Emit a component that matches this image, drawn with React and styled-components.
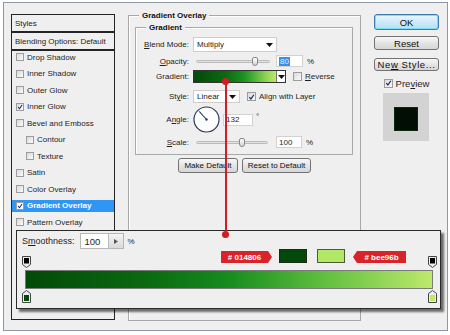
import React from 'react';
import styled, { createGlobalStyle } from 'styled-components';

const FONT = `"Liberation Sans", Arial, sans-serif`;

const GlobalStyle = createGlobalStyle`
  html, body { margin: 0; padding: 0; background: #fff; }
  body { font-family: ${FONT}; color: #1e1e1e; white-space: nowrap; }
  * { box-sizing: border-box; }
`;

const Window = styled.div`
  position: relative;
  width: 445px;
  height: 329px;
  margin: 2px 0 0 3px;
  padding: 11px 7px 0 7px;
  border: 1px solid #8d97a6;
  background: #efefef;
  display: flex;
  gap: 13px;
`;

/* ---------- left styles list ---------- */

const LeftCol = styled.div`
  width: 104px;
  height: 306px;
  display: flex;
  flex-direction: column;
`;

const HeadBox = styled.div`
  height: 18px;
  border: 1px solid #242424;
  padding-left: 3px;
  display: flex;
  align-items: center;
  font-size: 8px;
`;

const ListBox = styled.div`
  flex: 1;
  border: 1px solid #242424;
  display: flex;
  flex-direction: column;
  gap: 4.5px;
`;

const Item = styled.div`
  height: 12px;
  display: flex;
  align-items: center;
  gap: 3px;
  padding-left: ${p => (p.$indent ? 14 : 4)}px;
  font-size: 8px;
  background: ${p => (p.$active ? '#2f96f5' : 'transparent')};
  color: ${p => (p.$active ? '#fff' : '#1e1e1e')};
  font-weight: ${p => (p.$active ? 'bold' : 'normal')};
`;

const Box = styled.span`
  flex: none;
  width: ${p => p.$size || 8}px;
  height: ${p => p.$size || 8}px;
  border: 1px solid #9c9c9c;
  background: ${p => (p.$white ? '#fff' : 'linear-gradient(135deg, #d9d9d9, #fbfbfb)')};
  display: inline-flex;
  align-items: center;
  justify-content: center;
`;

const Check = ({ checked, size, white }) => (
  <Box $size={size} $white={white}>
    {checked && (
      <svg width="8" height="8" viewBox="0 0 10 10">
        <path d="M1.8 5.2 L4.2 7.8 L8.4 1.8" fill="none" stroke="#1c2c70" strokeWidth="1.7" />
      </svg>
    )}
  </Box>
);

/* ---------- group boxes ---------- */

const Group = styled.div`
  border: 1px solid #a8a8a8;
  box-shadow: inset 1px 1px 0 #fff;
  height: ${p => p.$h}px;
  margin: ${p => p.$m || 0};
`;

const Legend = styled.div`
  width: fit-content;
  margin: -6px 0 0 10px;
  padding: 0 3px;
  line-height: 11px;
  background: #efefef;
  font-weight: bold;
  font-size: 8px;
  color: #111;
`;

const MidCol = styled.div`
  width: 233px;
  margin-top: 1px;
`;

const Row = styled.div`
  display: grid;
  grid-template-columns: 53px auto;
  column-gap: 4px;
  align-items: center;
  height: ${p => p.$h}px;
  margin-top: ${p => p.$mt}px;
`;

const Label = styled.span`
  text-align: right;
  font-size: 8px;
  color: #222;
`;

const Controls = styled.div`
  display: flex;
  align-items: center;
  height: 100%;
  font-size: 8px;
`;

const Select = styled.div`
  width: ${p => p.$w}px;
  height: 100%;
  background: #fff;
  border: 1px solid #cdcdcd;
  padding: 0 3px;
  display: flex;
  align-items: center;
  justify-content: space-between;
  font-size: 8px;
`;

const Caret = () => (
  <svg width="7" height="4" viewBox="0 0 7 4">
    <path d="M0 0h7L3.5 4z" fill="#111" />
  </svg>
);

const Track = styled.div`
  position: relative;
  width: ${p => p.$w}px;
  height: 3px;
  margin-left: 3px;
  background: #e3e3e3;
  border: 1px solid #bababa;
  border-radius: 2px;
`;

const Thumb = styled.div`
  position: absolute;
  top: -4px;
  width: 6px;
  height: 9px;
  background: linear-gradient(#fefefe, #d4d4d4);
  border: 1px solid #888;
  border-radius: 2px 2px 3px 3px;
`;

const Field = styled.div`
  width: ${p => p.$w}px;
  height: ${p => p.$h || 12}px;
  margin-left: ${p => p.$ml || 0}px;
  background: #fff;
  border: 1px solid #d2d2d2;
  padding-left: 2px;
  display: flex;
  align-items: center;
  font-size: 8px;
`;

const Selected = styled.span`
  background: #3d8ee8;
  color: #e2efff;
  padding: 0 1px;
`;

const Unit = styled.span`
  margin-left: ${p => p.$ml || 4}px;
  font-size: 8px;
  align-self: ${p => (p.$top ? 'flex-start' : 'center')};
  margin-top: ${p => (p.$top ? 6 : 0)}px;
`;

const GradPicker = styled.div`
  width: 93px;
  height: 100%;
  border: 1px solid #333;
  display: flex;
`;

const GradFill = styled.div`
  flex: 1;
  background: linear-gradient(to right, #024a08, #0b6c10 40%, #1e9424 62%, #8fd450 88%, #bee96b);
`;

const GradArrow = styled.div`
  width: 9px;
  background: #fff;
  border-left: 1px solid #777;
  display: flex;
  align-items: center;
  justify-content: center;
`;

const CheckLabel = styled.span`
  margin-left: 3px;
`;

const Spacer = styled.span`
  width: ${p => p.$w}px;
  flex: ${p => (p.$grow ? 1 : 'none')};
`;

const ButtonRow = styled.div`
  display: flex;
  justify-content: center;
  gap: 4px;
  margin-top: 3px;
`;

const Button = styled.div`
  width: ${p => p.$w}px;
  height: ${p => p.$h}px;
  margin-top: ${p => p.$mt || 0}px;
  border: 1px solid #727272;
  border-radius: 3px;
  background: linear-gradient(#f8f8f8, #e4e4e4 50%, #d6d6d6);
  display: flex;
  align-items: center;
  justify-content: center;
  font-size: ${p => p.$fs || 8}px;
  letter-spacing: ${p => p.$ls || 0}px;
  color: #111;
`;

const DefaultButton = styled(Button)`
  border-color: #3a7ab0;
  box-shadow: inset 0 0 0 1px #7fdcf3;
  background: linear-gradient(#eaf6fc, #cfeaf8 50%, #b5dff3);
`;

/* ---------- right column ---------- */

const RightCol = styled.div`
  width: 65px;
  display: flex;
  flex-direction: column;
`;

const PreviewRow = styled.div`
  display: flex;
  align-items: center;
  justify-content: center;
  gap: 3px;
  height: 10px;
  margin-top: 7px;
  font-size: 9.5px;
`;

const PreviewBox = styled.div`
  width: 46px;
  height: 48px;
  margin: 5px 0 0 9px;
  background: #d3d3d3;
  display: flex;
  align-items: center;
  justify-content: center;
`;

const PreviewInner = styled.div`
  width: 24px;
  height: 24px;
  margin-top: 4px;
  background: #020e04;
  border: 1px solid #0a2a0e;
`;

/* ---------- gradient editor callout ---------- */

const Popup = styled.div`
  position: absolute;
  left: 12px;
  top: 227px;
  width: 425px;
  height: 79px;
  border: 1px solid #2a2a2a;
  background: #efefef;
  box-shadow: 3px 3px 2px rgba(0, 0, 0, 0.55);
  padding: 2px 3px 0 5px;
  display: flex;
  flex-direction: column;
`;

const SmoothRow = styled.div`
  display: flex;
  align-items: center;
  height: 16px;
  font-size: 9px;
`;

const SmoothInput = styled.div`
  width: 29px;
  height: 16px;
  margin-left: 5px;
  background: #fff;
  border: 1px solid #b9b9b9;
  padding-left: 4px;
  display: flex;
  align-items: center;
  font-size: 9.5px;
`;

const Spin = styled.div`
  width: 15px;
  height: 16px;
  border: 1px solid #b5b5b5;
  border-left: none;
  background: linear-gradient(#f4f4f4, #d9d9d9);
  display: flex;
  align-items: center;
  justify-content: center;
`;

const StopRow = styled.div`
  display: flex;
  align-items: flex-end;
  height: ${p => p.$h}px;
  margin-top: ${p => p.$mt || 0}px;
`;

const Tags = styled.div`
  margin-left: auto;
  margin-right: 22px;
  align-self: flex-start;
  display: flex;
  align-items: flex-end;
  height: 14px;
`;

const Tag = styled.div`
  width: ${p => p.$w}px;
  height: 12px;
  margin-left: ${p => p.$ml || 0}px;
  background: #d9232b;
  color: #fff;
  font-weight: bold;
  font-size: 8px;
  display: flex;
  align-items: center;
  justify-content: center;
  padding: ${p => (p.$dir === 'right' ? '0 4px 0 0' : '0 0 0 4px')};
  clip-path: ${p =>
    p.$dir === 'right'
      ? 'polygon(0 0, calc(100% - 4px) 0, 100% 50%, calc(100% - 4px) 100%, 0 100%)'
      : 'polygon(4px 0, 100% 0, 100% 100%, 4px 100%, 0 50%)'};
`;

const Swatch = styled.div`
  width: 28px;
  height: 14px;
  margin-left: ${p => p.$ml}px;
  background: ${p => p.$c};
  border: 1px solid ${p => p.$b};
`;

const Bar = styled.div`
  height: 19px;
  margin: 2px 4px 0 3px;
  border: 1px solid #7a7a7a;
  background: linear-gradient(to right, #024a08, #0a6a10 30%, #168c1e 50%, #62c040 74%, #bee96b);
`;

const StopTop = () => (
  <svg width="9" height="12" viewBox="0 0 9 12">
    <path d="M0.5 0.5h8v8L4.5 11.5 0.5 8.5z" fill="#eee" stroke="#444" />
    <rect x="2" y="2" width="5" height="5.5" fill="#000" />
  </svg>
);

const StopBottom = ({ color }) => (
  <svg width="9" height="13" viewBox="0 0 9 13">
    <path d="M4.5 0.5L8.5 3.5v9h-8v-9z" fill="#eee" stroke="#444" />
    <rect x="2" y="5" width="5" height="6" fill={color} />
  </svg>
);

const Connector = styled.div`
  position: absolute;
  left: 218px;
  top: 75px;
  width: 7px;
  height: 160px;
  display: flex;
  flex-direction: column;
  align-items: center;
  z-index: 2;
`;

const Dot = styled.div`
  width: 7px;
  height: 7px;
  flex: none;
  border-radius: 50%;
  background: #d21c26;
`;

const Line = styled.div`
  flex: 1;
  width: 2px;
  margin: -3px 0;
  background: #d21c26;
`;

const U = styled.span`
  text-decoration: underline;
`;

const Dial = () => (
  <svg width="27" height="27" viewBox="0 0 27 27">
    <circle cx="13.5" cy="13.5" r="12.5" fill="#fff" stroke="#2c3a58" strokeWidth="1.2" />
    <line x1="13.5" y1="13.5" x2="6.2" y2="5.4" stroke="#2c3a58" strokeWidth="1.1" />
    <circle cx="13.5" cy="13.5" r="1.2" fill="#2c3a58" />
  </svg>
);

const styleItems = [
  { name: 'Drop Shadow' },
  { name: 'Inner Shadow' },
  { name: 'Outer Glow' },
  { name: 'Inner Glow', checked: true },
  { name: 'Bevel and Emboss' },
  { name: 'Contour', indent: true },
  { name: 'Texture', indent: true },
  { name: 'Satin' },
  { name: 'Color Overlay' },
  { name: 'Gradient Overlay', checked: true, active: true },
  { name: 'Pattern Overlay' },
];

export default function App() {
  return (
    <>
      <GlobalStyle />
      <Window>
        <LeftCol>
          <HeadBox>Styles</HeadBox>
          <HeadBox>Blending Options: Default</HeadBox>
          <ListBox>
            {styleItems.map(it => (
              <Item key={it.name} $indent={it.indent} $active={it.active}>
                <Check checked={it.checked} white={it.active} />
                <span>{it.name}</span>
              </Item>
            ))}
          </ListBox>
        </LeftCol>

        <MidCol>
          <Group $h={306}>
            <Legend>Gradient Overlay</Legend>
            <Group $h={128} $m="6px 7px 0 6px">
              <Legend>Gradient</Legend>
              <Row $h={15} $mt={4}>
                <Label><U>B</U>lend Mode:</Label>
                <Controls>
                  <Select $w={84}>Multiply<Caret /></Select>
                </Controls>
              </Row>
              <Row $h={12} $mt={3}>
                <Label><U>O</U>pacity:</Label>
                <Controls>
                  <Track $w={74}><Thumb style={{ left: 55 }} /></Track>
                  <Field $w={27} $ml={6}><Selected>80</Selected></Field>
                  <Unit>%</Unit>
                </Controls>
              </Row>
              <Row $h={13} $mt={3}>
                <Label>Gradient:</Label>
                <Controls>
                  <GradPicker>
                    <GradFill />
                    <GradArrow><Caret /></GradArrow>
                  </GradPicker>
                  <Spacer $w={7} />
                  <Check size={9} />
                  <CheckLabel><U>R</U>everse</CheckLabel>
                </Controls>
              </Row>
              <Row $h={13} $mt={7}>
                <Label>St<U>y</U>le:</Label>
                <Controls>
                  <Select $w={47}>Linear<Caret /></Select>
                  <Spacer $w={7} />
                  <Check checked size={9} />
                  <CheckLabel>Align with Layer</CheckLabel>
                </Controls>
              </Row>
              <Row $h={27} $mt={3}>
                <Label>A<U>n</U>gle:</Label>
                <Controls>
                  <Dial />
                  <Field $w={30} $ml={3}>132</Field>
                  <Unit $ml={3} $top>°</Unit>
                </Controls>
              </Row>
              <Row $h={12} $mt={3}>
                <Label><U>S</U>cale:</Label>
                <Controls>
                  <Track $w={72}><Thumb style={{ left: 42 }} /></Track>
                  <Field $w={26} $ml={8}>100</Field>
                  <Unit>%</Unit>
                </Controls>
              </Row>
            </Group>
            <ButtonRow>
              <Button $w={60} $h={15}>Make Default</Button>
              <Button $w={69} $h={15}>Reset to Default</Button>
            </ButtonRow>
          </Group>
        </MidCol>

        <RightCol>
          <DefaultButton $w={65} $h={16} $fs={9.5}>OK</DefaultButton>
          <Button $w={65} $h={14} $mt={6} $fs={9.5}>Reset</Button>
          <Button $w={65} $h={13} $mt={8} $fs={9.5} $ls={0.6}>
            <span>Ne<U>w</U> Style...</span>
          </Button>
          <PreviewRow>
            <Check checked size={9} />
            <span>Pre<U>v</U>iew</span>
          </PreviewRow>
          <PreviewBox><PreviewInner /></PreviewBox>
        </RightCol>

        <Popup>
          <SmoothRow>
            <span>S<U>m</U>oothness:</span>
            <SmoothInput>100</SmoothInput>
            <Spin>
              <svg width="4" height="5" viewBox="0 0 4 5"><path d="M0 0l4 2.5L0 5z" fill="#555" /></svg>
            </Spin>
            <Unit $ml={4}>%</Unit>
          </SmoothRow>
          <StopRow $h={19}>
            <StopTop />
            <Tags>
              <Tag $w={51} $dir="right"># 014806</Tag>
              <Swatch $ml={7} $c="#02480a" $b="#1c2a1c" />
              <Swatch $ml={10} $c="#b3e866" $b="#4a5a3a" />
              <Tag $w={53} $ml={8} $dir="left"># bee96b</Tag>
            </Tags>
            <StopTop />
          </StopRow>
          <Bar />
          <StopRow $h={13} $mt={1}>
            <StopBottom color="#024a08" />
            <Spacer $w={0} $grow />
            <StopBottom color="#bee96b" />
          </StopRow>
        </Popup>

        <Connector>
          <Dot />
          <Line />
          <Dot />
        </Connector>
      </Window>
    </>
  );
}
